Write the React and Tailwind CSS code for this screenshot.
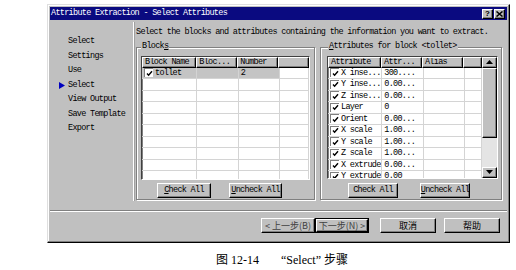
import React from 'react';

const mono = { fontFamily: '"Liberation Mono", "Noto Sans CJK SC", monospace' };

function Raised({ className = '', children }) {
  return (
    <div className={`border-t border-l border-t-white border-l-white border-r border-b border-r-black border-b-black shadow-[inset_-1px_-1px_0_#808080] bg-[#c0c0c0] ${className}`}>
      {children}
    </div>
  );
}

function Check() {
  return (
    <span className="inline-flex items-center justify-center w-[9px] h-[9px] bg-white border-t border-l border-t-[#808080] border-l-[#808080] mr-[2px] shrink-0">
      <svg width="7" height="7" viewBox="0 0 7 7">
        <path d="M1 3.5 L2.6 5.3 L6 1.2" stroke="#000" strokeWidth="1.4" fill="none" />
      </svg>
    </span>
  );
}

function Header({ cols }) {
  return (
    <div className="flex h-[11px]">
      {cols.map((c, i) => (
        <Raised key={i} className="flex items-center px-[2px] overflow-hidden text-[8.5px] tracking-[-0.7px] leading-[9px]">
          <span style={{ width: c.w - 5 }} className="block whitespace-nowrap">{c.t}</span>
        </Raised>
      ))}
    </div>
  );
}

function Row({ cells, widths, selected }) {
  return (
    <div className="flex h-[11.5px] border-b border-[#d4d4d4]">
      {widths.map((w, i) => (
        <div
          key={i}
          style={{ width: w }}
          className={`flex items-center px-[2px] border-r border-[#d4d4d4] text-[8.5px] tracking-[-0.7px] leading-none whitespace-nowrap overflow-hidden ${selected && i < 3 ? 'bg-[#c4c4c4]' : ''}`}
        >
          {cells[i] && cells[i].check && <Check />}
          {cells[i] && cells[i].t}
        </div>
      ))}
    </div>
  );
}

function Btn({ u, rest, className = '' }) {
  return (
    <Raised className={`flex items-center justify-center h-[15px] text-[8.5px] tracking-[-0.7px] whitespace-nowrap ${className}`}>
      <span>
        <span className="underline">{u}</span>{rest}
      </span>
    </Raised>
  );
}

const blockW = [56, 42, 42, 29];
const attrW = [55, 42, 42, 17];
const attrRows = [
  ['X inse...', '300....'],
  ['Y inse...', '0.00...'],
  ['Z inse...', '0.00...'],
  ['Layer', '0'],
  ['Orient', '0.00...'],
  ['X scale', '1.00...'],
  ['Y scale', '1.00...'],
  ['Z scale', '1.00...'],
  ['X extrude', '0.00...'],
  ['Y extrude', '0.00'],
];

export default function App() {
  return (
    <div className="w-[516px] h-[270px] bg-white overflow-hidden text-black" style={mono}>
      <div className="ml-[47px] mt-[4px] w-[463px] h-[239px] bg-[#c0c0c0] border-t border-l border-t-[#dfdfdf] border-l-[#dfdfdf] border-r border-b border-r-black border-b-black shadow-[inset_-1px_-1px_0_#808080,inset_1px_1px_0_#fff] p-[2px] flex flex-col">
        {/* title bar */}
        <div className="h-[13px] bg-[#0a0a80] flex items-center justify-between pl-[1px] pr-[2px]">
          <span className="text-white text-[8.5px] tracking-[-0.7px] leading-none">Attribute Extraction - Select Attributes</span>
          <div className="flex">
            <Raised className="w-[11px] h-[10px] flex items-center justify-center text-[8px] font-bold leading-none">?</Raised>
            <Raised className="w-[11px] h-[10px] flex items-center justify-center ml-[1px]">
              <svg width="7" height="6" viewBox="0 0 7 6"><path d="M0.5 0.5 L6.5 5.5 M6.5 0.5 L0.5 5.5" stroke="#000" strokeWidth="1.5" /></svg>
            </Raised>
          </div>
        </div>

        <div className="flex mt-[2px]">
          {/* left nav */}
          <div className="w-[84px] h-[179px] border-r border-r-white shadow-[1px_0_0_#a0a0a0] pl-[18px] pt-[12px] text-[8.5px] tracking-[-0.7px] leading-[14.5px]">
            <div>Select</div>
            <div>Settings</div>
            <div>Use</div>
            <div className="relative">
              <svg className="absolute left-[-9px] top-[4px]" width="6" height="7" viewBox="0 0 6 7"><path d="M0 0 L6 3.5 L0 7 Z" fill="#0000c0" /></svg>
              Select
            </div>
            <div>View Output</div>
            <div>Save Template</div>
            <div>Export</div>
          </div>

          {/* right pane */}
          <div className="flex-1 pl-[2px]">
            <div className="text-[8.5px] tracking-[-0.7px] leading-none mt-[6px] whitespace-nowrap">
              Select the blocks and attributes containing the information you want to extract.
            </div>
            <div className="flex mt-[10px] gap-[5px]">
              {/* Blocks group */}
              <div className="relative w-[179px] h-[153px] border border-[#808080] shadow-[inset_1px_1px_0_#fff,1px_1px_0_#fff] px-[4px] pt-[8px]">
                <span className="absolute left-[4px] top-[-6px] bg-[#c0c0c0] px-[1px] text-[8.5px] tracking-[-0.7px] leading-none">Block<span className="underline">s</span></span>
                <div className="h-[124px] bg-white border-t border-l border-t-[#404040] border-l-[#404040] border-r border-b border-r-white border-b-white shadow-[inset_1px_1px_0_#808080] overflow-hidden">
                  <Header cols={[{ t: 'Block Name', w: 56 }, { t: 'Bloc...', w: 42 }, { t: 'Number', w: 42 }, { t: '', w: 31 }]} />
                  <Row widths={blockW} selected cells={[{ check: true, t: 'tollet' }, null, { t: '2' }, null]} />
                  {Array.from({ length: 9 }).map((_, i) => (
                    <Row key={i} widths={blockW} cells={[]} />
                  ))}
                </div>
                <div className="flex mt-[3px] ml-[16px] gap-[18px]">
                  <Btn u="C" rest="heck All" className="w-[54px]" />
                  <Btn u="U" rest="ncheck All" className="w-[53px]" />
                </div>
              </div>

              {/* Attributes group */}
              <div className="relative w-[182px] h-[153px] border border-[#808080] shadow-[inset_1px_1px_0_#fff,1px_1px_0_#fff] pl-[6px] pr-[3px] pt-[8px]">
                <span className="absolute left-[7px] top-[-6px] bg-[#c0c0c0] px-[1px] text-[8.5px] tracking-[-0.7px] leading-none whitespace-nowrap"><span className="underline">A</span>ttributes for block &lt;tollet&gt;</span>
                <div className="h-[123px] flex bg-white border-t border-l border-t-[#404040] border-l-[#404040] border-r border-b border-r-white border-b-white shadow-[inset_1px_1px_0_#808080] overflow-hidden">
                  <div className="flex-1 overflow-hidden">
                    <Header cols={[{ t: 'Attribute', w: 55 }, { t: 'Attr...', w: 42 }, { t: 'Alias', w: 42 }, { t: '', w: 19 }]} />
                    {attrRows.map((r, i) => (
                      <Row key={i} widths={attrW} cells={[{ check: true, t: r[0] }, { t: r[1] }, null, null]} />
                    ))}
                  </div>
                  <div className="w-[15px] flex flex-col bg-[#e4e4e4]">
                    <Raised className="h-[11px] flex items-center justify-center">
                      <svg width="7" height="4" viewBox="0 0 7 4"><path d="M3.5 0 L7 4 L0 4 Z" fill="#000" /></svg>
                    </Raised>
                    <Raised className="h-[70px]" />
                    <div className="flex-1" />
                    <Raised className="h-[11px] flex items-center justify-center">
                      <svg width="7" height="4" viewBox="0 0 7 4"><path d="M0 0 L7 0 L3.5 4 Z" fill="#000" /></svg>
                    </Raised>
                  </div>
                </div>
                <div className="flex mt-[4px] ml-[21px] gap-[22px]">
                  <Btn u="" rest="Check All" className="w-[50px]" />
                  <Btn u="U" rest="ncheck All" className="w-[50px]" />
                </div>
              </div>
            </div>
          </div>
        </div>

        {/* separator */}
        <div className="mt-[9px] border-t border-t-[#808080] border-b border-b-white" />

        {/* bottom buttons */}
        <div className="flex justify-end pr-[7px] mt-[6px]" style={{ fontFamily: '"Noto Sans CJK SC", sans-serif' }}>
          <Raised className="w-[54px] h-[15px] flex items-center justify-center text-[9px] text-[#404040] leading-none whitespace-nowrap">&lt; 上一步(B)</Raised>
          <div className="w-[54px] h-[15px] border border-black">
            <Raised className="w-full h-full flex items-center justify-center text-[9px] text-[#404040] leading-none whitespace-nowrap">下一步(N) &gt;</Raised>
          </div>
          <Raised className="w-[56px] h-[15px] ml-[11px] flex items-center justify-center text-[9px] leading-none">取消</Raised>
          <Raised className="w-[56px] h-[15px] ml-[8px] flex items-center justify-center text-[9px] leading-none">帮助</Raised>
        </div>
      </div>

      {/* caption */}
      <div className="mt-[11px] flex pl-[216px] text-[12px] leading-none" style={{ fontFamily: '"Liberation Serif", "Noto Sans CJK SC", serif' }}>
        <span>图 12-14</span>
        <span className="ml-[22px]">“Select” 步骤</span>
      </div>
    </div>
  );
}
